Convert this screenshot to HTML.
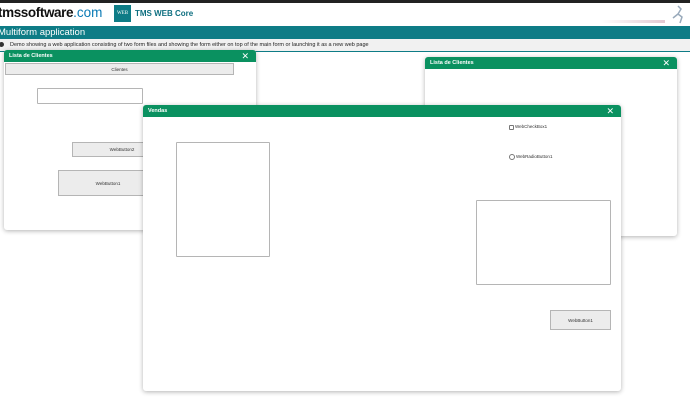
<!DOCTYPE html>
<html><head><style>
*{margin:0;padding:0;box-sizing:border-box}
body{width:690px;height:415px;overflow:hidden;background:#fff;font-family:"Liberation Sans",sans-serif;position:relative}
.a{position:absolute}
.form{position:absolute;background:#fff;border-radius:3px;box-shadow:0 1px 5px rgba(0,0,0,.3)}
.hd{height:12px;background:#0a9160;color:#fff;font-size:5.5px;font-weight:bold;padding:0 5px;line-height:12px;border-radius:3px 3px 0 0;position:relative}
.hd .x{position:absolute;right:7px;top:0;font-size:9px;font-weight:normal;line-height:12px}
.btn{position:absolute;background:#ececec;border:1px solid #b5b5b5;font-size:4.5px;color:#333;display:flex;align-items:center;justify-content:center}
.box{position:absolute;border:1px solid #b5b5b5;background:#fff;border-radius:1px}
</style></head><body>
<div class="a" style="left:0;top:0;width:690px;height:3px;background:#222"></div>
<div class="a" style="left:-2px;top:5px;font-size:13.5px;font-weight:bold;color:#111;letter-spacing:-0.4px">tmssoftware<span style="color:#0a7ab5;font-weight:normal;letter-spacing:0">.com</span></div>
<div class="a" style="left:114px;top:5px;width:17px;height:17px;background:#0e7c86;color:#fff;font-size:5px;font-family:'Liberation Serif',serif;display:flex;align-items:center;justify-content:center">WEB</div>
<div class="a" style="left:135px;top:9px;font-size:8px;font-weight:bold;color:#0e6f80">TMS WEB Core</div>
<div class="a" style="left:665px;top:3px;width:22px;height:22px">
<svg width="22" height="22"><path d="M13 3l3 3-3 5 4 3-2 6M13 11l-5 4" stroke="#9ab" stroke-width="1.5" fill="none"/></svg></div>
<div class="a" style="left:600px;top:20px;width:65px;height:3px;background:linear-gradient(90deg,rgba(255,255,255,0),#e3c9d2)"></div>
<div class="a" style="left:0;top:26px;width:690px;height:13px;background:#0e7c86;color:#fff;font-size:9.5px;line-height:13px;text-indent:-2px">Multiform application</div>
<div class="a" style="left:0;top:39px;width:690px;height:13px;background:#f1f1f1;border-bottom:1px solid #0e7c86;font-size:5.5px;color:#222;padding:3px 0 0 10px">Demo showing a web application consisting of two form files and showing the form either on top of the main form or launching it as a new web page</div>
<div class="a" style="left:-1px;top:42px;width:5px;height:5px;border-radius:50%;background:#333"></div>

<div class="form" style="left:4px;top:50px;width:252px;height:180px">
<div class="hd">Lista de Clientes<span class="x">✕</span></div>
<div class="btn" style="left:1px;top:13px;width:229px;height:12px">Clientes</div>
<div class="box" style="left:33px;top:38px;width:106px;height:16px"></div>
<div class="btn" style="left:68px;top:92px;width:100px;height:15px">WebButton2</div>
<div class="btn" style="left:54px;top:120px;width:100px;height:26px">WebButton1</div>
</div>

<div class="form" style="left:425px;top:57px;width:252px;height:179px">
<div class="hd">Lista de Clientes<span class="x">✕</span></div>
</div>

<div class="form" style="left:143px;top:105px;width:478px;height:286px">
<div class="hd">Vendas<span class="x">✕</span></div>
<div class="box" style="left:33px;top:37px;width:94px;height:115px"></div>
<div class="a" style="left:366px;top:20px;width:5px;height:5px;border:1px solid #777;border-radius:1px"></div>
<div class="a" style="left:372px;top:19px;font-size:4.5px;color:#333">WebCheckBox1</div>
<div class="a" style="left:366px;top:49px;width:6px;height:6px;border:1px solid #777;border-radius:50%"></div>
<div class="a" style="left:373px;top:49px;font-size:4.5px;color:#333">WebRadioButton1</div>
<div class="box" style="left:333px;top:95px;width:135px;height:85px"></div>
<div class="btn" style="left:407px;top:205px;width:61px;height:20px">WebButton1</div>
</div>
</body></html>
